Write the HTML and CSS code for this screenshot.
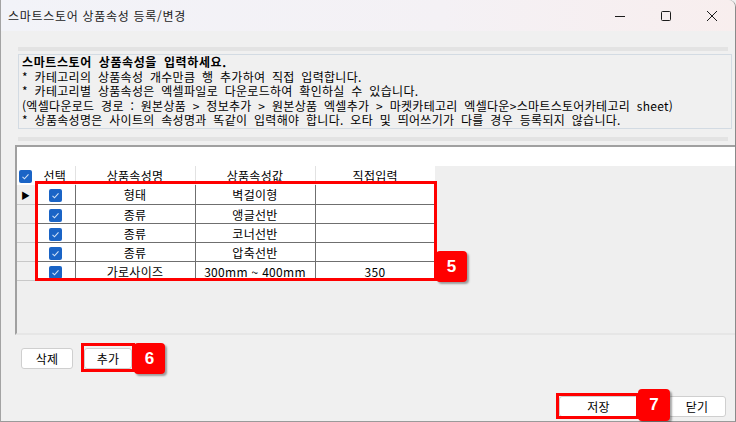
FILE: index.html
```html
<!doctype html>
<html lang="ko">
  <head>
    <meta charset="utf-8">
    <title>스마트스토어 상품속성 등록/변경</title>
    <link rel="stylesheet" href="styles.css">
  </head>
  <body>
    <div class="window">
      <div class="titlebar">
        <span class="title">스마트스토어 상품속성 등록/변경</span>
        <div class="controls">
          <span class="ctl"><svg width="12" height="12" viewBox="0 0 12 12"><path d="M1 6.5h10" stroke="#1b1b1b" stroke-width="1"/></svg></span>
          <span class="ctl"><svg width="12" height="12" viewBox="0 0 12 12"><rect x="1.5" y="1.5" width="9" height="9" rx="1" fill="none" stroke="#1b1b1b" stroke-width="1"/></svg></span>
          <span class="ctl"><svg width="12" height="12" viewBox="0 0 12 12"><path d="M1 1L11 11M11 1L1 11" stroke="#1b1b1b" stroke-width="1"/></svg></span>
        </div>
      </div>

      <div class="content">
        <div class="band"></div>
        <div class="notice">
          <p class="lead">스마트스토어 상품속성을 입력하세요.</p>
          <p>* 카테고리의 상품속성 개수만큼 행 추가하여 직접 입력합니다.</p>
          <p>* 카테고리별 상품속성은 엑셀파일로 다운로드하여 확인하실 수 있습니다.</p>
          <p>(엑셀다운로드 경로 : 원본상품 &gt; 정보추가 &gt; 원본상품 엑셀추가 &gt; 마켓카테고리 엑셀다운&gt;스마트스토어카테고리 sheet)</p>
          <p>* 상품속성명은 사이트의 속성명과 똑같이 입력해야 합니다. 오타 및 띄어쓰기가 다를 경우 등록되지 않습니다.</p>
        </div>
        <div class="band band-low"></div>

        <div class="grid">
          <div class="grid-top"></div>
          <div class="grid-main">
            <table class="attr-table">
              <colgroup>
                <col class="c-hdr"><col class="c-sel"><col class="c-col"><col class="c-col"><col class="c-col">
              </colgroup>
              <thead>
                <tr>
                  <th class="rowhead"><span class="chk"><svg width="13" height="13" viewBox="0 0 13 13"><path d="M3.5 6.8l2 2 4-4.4" fill="none" stroke="#cfe0f7" stroke-width="1.1"/></svg></span></th>
                  <th>선택</th>
                  <th>상품속성명</th>
                  <th>상품속성값</th>
                  <th>직접입력</th>
                </tr>
              </thead>
              <tbody>
                <tr>
                  <td class="rowhead"><span class="arrow">&#9654;</span></td>
                  <td><span class="chk"><svg width="13" height="13" viewBox="0 0 13 13"><path d="M3.5 6.8l2 2 4-4.4" fill="none" stroke="#cfe0f7" stroke-width="1.1"/></svg></span></td>
                  <td>형태</td>
                  <td>벽걸이형</td>
                  <td></td>
                </tr>
                <tr>
                  <td class="rowhead"></td>
                  <td><span class="chk"><svg width="13" height="13" viewBox="0 0 13 13"><path d="M3.5 6.8l2 2 4-4.4" fill="none" stroke="#cfe0f7" stroke-width="1.1"/></svg></span></td>
                  <td>종류</td>
                  <td>앵글선반</td>
                  <td></td>
                </tr>
                <tr>
                  <td class="rowhead"></td>
                  <td><span class="chk"><svg width="13" height="13" viewBox="0 0 13 13"><path d="M3.5 6.8l2 2 4-4.4" fill="none" stroke="#cfe0f7" stroke-width="1.1"/></svg></span></td>
                  <td>종류</td>
                  <td>코너선반</td>
                  <td></td>
                </tr>
                <tr>
                  <td class="rowhead"></td>
                  <td><span class="chk"><svg width="13" height="13" viewBox="0 0 13 13"><path d="M3.5 6.8l2 2 4-4.4" fill="none" stroke="#cfe0f7" stroke-width="1.1"/></svg></span></td>
                  <td>종류</td>
                  <td>압축선반</td>
                  <td></td>
                </tr>
                <tr>
                  <td class="rowhead"></td>
                  <td><span class="chk"><svg width="13" height="13" viewBox="0 0 13 13"><path d="M3.5 6.8l2 2 4-4.4" fill="none" stroke="#cfe0f7" stroke-width="1.1"/></svg></span></td>
                  <td>가로사이즈</td>
                  <td>300mm ~ 400mm</td>
                  <td>350</td>
                </tr>
              </tbody>
            </table>
            <div class="mark mark-rows"></div>
            <span class="badge badge-5">5</span>
          </div>
        </div>

        <div class="actions">
          <button type="button" class="btn btn-del">삭제</button>
          <span class="marked">
            <button type="button" class="btn btn-add">추가</button>
            <span class="mark mark-add"></span>
            <span class="badge badge-6">6</span>
          </span>
        </div>

        <div class="footer">
          <span class="marked">
            <button type="button" class="btn btn-save">저장</button>
            <span class="mark mark-save"></span>
            <span class="badge badge-7">7</span>
          </span>
          <button type="button" class="btn btn-close">닫기</button>
        </div>
      </div>
    </div>
  </body>
</html>
```

FILE: styles.css
```css
html, body {
     margin: 0;
     padding: 0;
}
body {
     width: 736px;
     height: 422px;
     overflow: hidden;
     background-color: #f0f0f0;
     font-family: "Noto Sans CJK KR", "Liberation Sans", sans-serif;
     font-size: 12px;
     color: #000;
}
.window {
     box-sizing: border-box;
     width: 736px;
     height: 422px;
     border-left: 1px solid #a3a3a3;
     border-right: 1px solid #8a8a8a;
     border-bottom: 1px solid #9a9a9a;
     border-top-right-radius: 7px;
     background-color: #f0f0f0;
     display: flex;
     flex-direction: column;
     position: relative;
}
.titlebar {
     height: 31px;
     display: flex;
     align-items: center;
     justify-content: space-between;
     background: linear-gradient(to right, #f2f3f8, #f4f1f5 60%, #f8eeee);
     border-top-right-radius: 7px;
}
.title {
     padding-left: 7px;
     font-size: 12px;
     letter-spacing: 0.7px;
     color: #1b1b1b;
     line-height: 1;
}
.controls {
     display: flex;
     align-items: center;
     height: 100%;
}
.ctl {
     width: 46px;
     height: 100%;
     display: flex;
     align-items: center;
     justify-content: center;
}
.ctl svg {
     display: block;
}
.content {
     flex: 1;
     display: flex;
     flex-direction: column;
}
.band {
     height: 4px;
     margin: 16px 7px 0 17px;
     background-color: #e3e3e3;
}
.band-low {
     margin-top: 8px;
}
.notice {
     box-sizing: border-box;
     height: 75px;
     margin: 3px 3px 0 17px;
     padding: 0 3px;
     border: 1px solid #d3dbe3;
     white-space: nowrap;
     overflow: hidden;
}
.notice p {
     margin: 0;
     line-height: 14.6px;
     letter-spacing: 0.3px;
     word-spacing: 3px;
}
.notice .lead {
     font-weight: 700;
     letter-spacing: 0.6px;
}

/* grid */
.grid {
     margin: 4px 0 0 14px;
     height: 190px;
     box-sizing: border-box;
     border-top: 2px solid #a0a0a0;
     border-left: 2px solid #a0a0a0;
     border-bottom: 2px solid #e6e6e6;
     display: flex;
     flex-direction: column;
}
.grid-top {
     height: 19px;
     background-color: #fff;
}
.grid-main {
     flex: 1;
     background-color: #efefef;
     position: relative;
}
.attr-table {
     border-collapse: collapse;
     table-layout: fixed;
     width: 418px;
     font-size: 12px;
     letter-spacing: 0.3px;
}
.c-hdr { width: 18px; }
.c-sel { width: 40px; }
.c-col { width: 120px; }
.attr-table th, .attr-table td {
     padding: 0;
     text-align: center;
     white-space: nowrap;
     overflow: hidden;
     line-height: 17px;
}
.attr-table th {
     height: 19px;
     font-weight: 400;
     background-color: #fff;
     border-right: 1px solid #e2e2e2;
     box-sizing: border-box;
}
.attr-table th:last-child {
     border-right: none;
}
.attr-table th.rowhead {
     text-align: left;
     border-right: none;
}
.attr-table th.rowhead .chk {
     margin-left: 2px;
}
.attr-table td {
     height: 18px;
     background-color: #fff;
     border-bottom: 1px solid #6f6f6f;
     border-right: 1px solid #6f6f6f;
}
.attr-table td.rowhead {
     background-color: #f0f0f0;
     border-bottom: 1px solid #c8c8c8;
     border-right: 1px solid #c8c8c8;
     text-align: left;
}
.arrow {
     font-size: 9px;
     padding-left: 4px;
     color: #000;
}
.chk {
     display: inline-block;
     width: 13px;
     height: 13px;
     border-radius: 2px;
     background-color: #1a64c6;
     vertical-align: middle;
     position: relative;
     top: -1px;
}
.chk svg {
     display: block;
}

/* annotations */
.mark {
     position: absolute;
     border: 3px solid #ff0000;
     pointer-events: none;
}
.mark-rows {
     left: 18px;
     top: 15px;
     width: 396px;
     height: 94px;
}
.badge {
     position: absolute;
     width: 31px;
     height: 31px;
     border-radius: 4px;
     background-color: #ff0000;
     color: #fff;
     font-family: "Liberation Sans", sans-serif;
     font-weight: 700;
     font-size: 17px;
     line-height: 31px;
     text-align: center;
     box-shadow: 2px 2px 2px rgba(0, 0, 0, 0.35);
}
.badge-5 {
     left: 419px;
     top: 85px;
}

/* buttons */
.btn {
     box-sizing: border-box;
     height: 21px;
     padding: 0;
     font-family: "Noto Sans CJK KR", "Liberation Sans", sans-serif;
     font-size: 12px;
     letter-spacing: 0.3px;
     line-height: 19px;
     color: #000;
     background-color: #fff;
     border: 1px solid #cfcfcf;
     border-radius: 3px;
}
.actions {
     display: flex;
     align-items: flex-start;
     margin: 13px 0 0 20px;
     gap: 11px;
}
.btn-del {
     width: 52px;
}
.btn-add {
     width: 48px;
     display: block;
}
.marked {
     position: relative;
     display: inline-block;
}
.mark-add {
     left: -3px;
     top: -5px;
     right: -3px;
     bottom: -3px;
}
.badge-6 {
     left: 50px;
     top: -5px;
}
.footer {
     display: flex;
     justify-content: flex-end;
     align-items: flex-start;
     margin: 27px 9px 0 0;
     gap: 30px;
}
.btn-save {
     width: 79px;
     display: block;
}
.btn-close {
     width: 58px;
}
.mark-save {
     left: -3px;
     top: -3px;
     right: -1px;
     bottom: -2px;
}
.badge-7 {
     left: 79px;
     top: -7px;
     width: 32px;
     height: 32px;
     line-height: 32px;
}
```
